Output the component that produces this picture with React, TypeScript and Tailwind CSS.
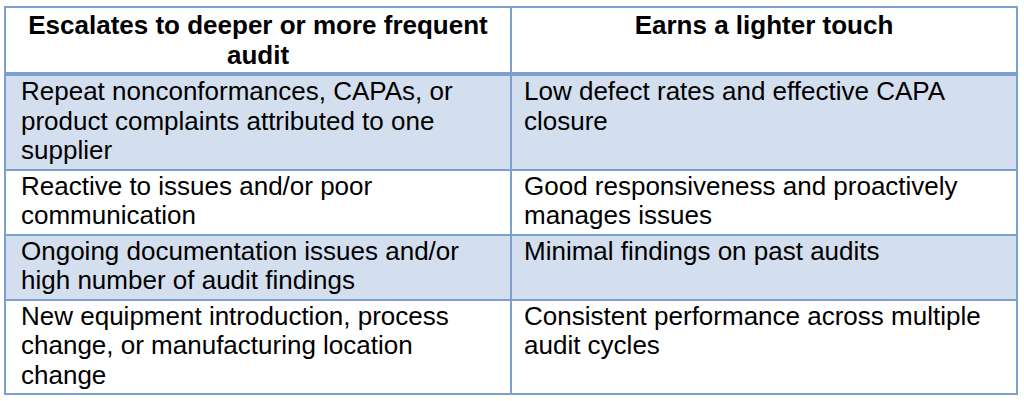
const ROWS: { left: string[]; right: string[]; shaded: boolean }[] = [
  {
    left: ['Repeat nonconformances, CAPAs, or', 'product complaints attributed to one', 'supplier'],
    right: ['Low defect rates and effective CAPA', 'closure'],
    shaded: true,
  },
  {
    left: ['Reactive to issues and/or poor', 'communication'],
    right: ['Good responsiveness and proactively', 'manages issues'],
    shaded: false,
  },
  {
    left: ['Ongoing documentation issues and/or', 'high number of audit findings'],
    right: ['Minimal findings on past audits'],
    shaded: true,
  },
  {
    left: ['New equipment introduction, process', 'change, or manufacturing location', 'change'],
    right: ['Consistent performance across multiple', 'audit cycles'],
    shaded: false,
  },
];

function Lines({ lines }: { lines: string[] }) {
  return (
    <>
      {lines.map((l, i) => (
        <div key={i} className="whitespace-nowrap">
          {l}
        </div>
      ))}
    </>
  );
}

export default function App() {
  return (
    <div
      className="h-[401px] w-[1024px] bg-white pl-[4px] pt-[6px] text-black"
      style={{ fontFamily: '"Liberation Sans", Arial, sans-serif' }}
    >
      <table className="w-[1012px] table-fixed border-collapse border-2 border-[#7ba0cd] text-[26px] leading-[29.5px]">
        <colgroup>
          <col className="w-[506px]" />
          <col className="w-[506px]" />
        </colgroup>
        <thead>
          <tr className="border-b-[4px] border-[#7ba0cd] bg-white">
            <th className="h-[67px] border-r-2 border-[#7ba0cd] px-[12px] pt-[3px] pb-[2px] text-center align-top font-bold">
              Escalates to deeper or more frequent
              <br />
              audit
            </th>
            <th className="border-r-2 border-[#7ba0cd] px-[12px] pt-[3px] pb-[2px] text-center align-top font-bold">
              Earns a lighter touch
            </th>
          </tr>
        </thead>
        <tbody>
          {ROWS.map((r, i) => (
            <tr
              key={i}
              className={`border-b-2 border-[#7ba0cd] ${r.shaded ? 'bg-[#d3dfee]' : 'bg-white'}`}
            >
              <td className="border-r-2 border-[#7ba0cd] pl-[15px] pr-[6px] pt-[1px] pb-[3px] align-top">
                <Lines lines={r.left} />
              </td>
              <td className="border-r-2 border-[#7ba0cd] pl-[12px] pr-[6px] pt-[1px] pb-[3px] align-top">
                <Lines lines={r.right} />
              </td>
            </tr>
          ))}
        </tbody>
      </table>
    </div>
  );
}
